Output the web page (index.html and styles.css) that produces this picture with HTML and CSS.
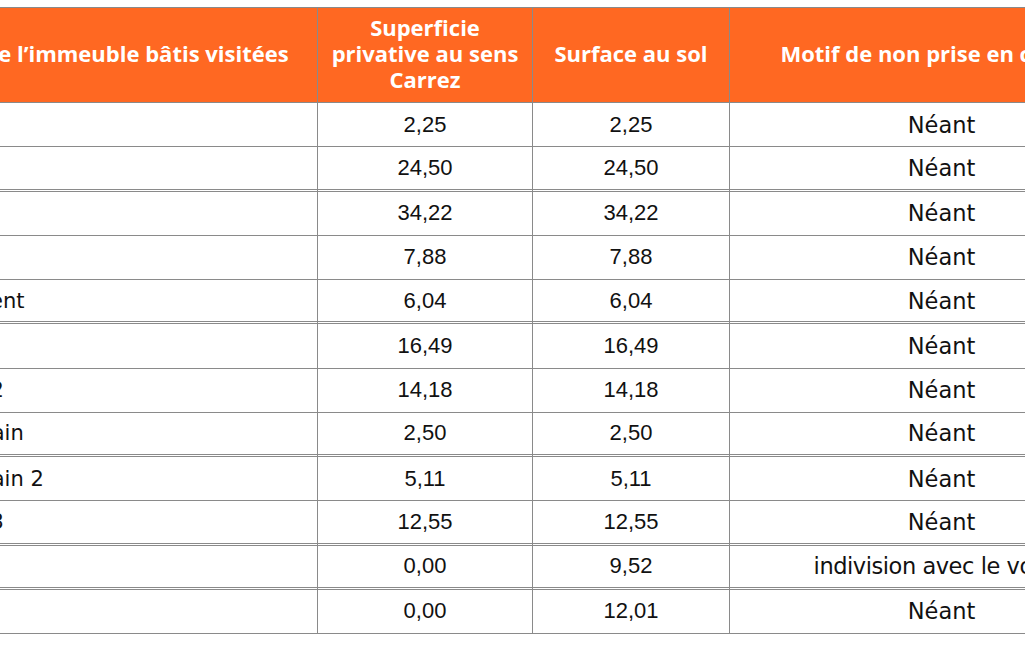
FILE: index.html
```html
<!DOCTYPE html>
<html lang="fr">
<head>
<meta charset="utf-8">
<title>Surfaces</title>
<link rel="stylesheet" href="styles.css">
</head>
<body>
<table class="surf">
  <thead>
    <tr>
      <th class="c1">Parties de l’immeuble bâtis visitées</th>
      <th class="c2">Superficie privative au sens Carrez</th>
      <th class="c3">Surface au sol</th>
      <th class="c4">Motif de non prise en compte</th>
    </tr>
  </thead>
  <tbody>
    <tr><td class="lbl">WC</td><td class="num">2,25</td><td class="num">2,25</td><td class="txt">Néant</td></tr>
    <tr class="dbl"><td class="lbl">Cuisine</td><td class="num">24,50</td><td class="num">24,50</td><td class="txt">Néant</td></tr>
    <tr><td class="lbl">Séjour</td><td class="num">34,22</td><td class="num">34,22</td><td class="txt">Néant</td></tr>
    <tr><td class="lbl">Bureau</td><td class="num">7,88</td><td class="num">7,88</td><td class="txt">Néant</td></tr>
    <tr class="dbl"><td class="lbl">Dégagement</td><td class="num">6,04</td><td class="num">6,04</td><td class="txt">Néant</td></tr>
    <tr><td class="lbl">Chambre</td><td class="num">16,49</td><td class="num">16,49</td><td class="txt">Néant</td></tr>
    <tr><td class="lbl">Chambre 2</td><td class="num">14,18</td><td class="num">14,18</td><td class="txt">Néant</td></tr>
    <tr class="dbl"><td class="lbl">Salle de bain</td><td class="num">2,50</td><td class="num">2,50</td><td class="txt">Néant</td></tr>
    <tr><td class="lbl">Salle de bain 2</td><td class="num">5,11</td><td class="num">5,11</td><td class="txt">Néant</td></tr>
    <tr class="dbl"><td class="lbl">Chambre 3</td><td class="num">12,55</td><td class="num">12,55</td><td class="txt">Néant</td></tr>
    <tr class="dbl"><td class="lbl">Cave</td><td class="num">0,00</td><td class="num">9,52</td><td class="txt long">indivision avec le voisin</td></tr>
    <tr><td class="lbl">Garage</td><td class="num">0,00</td><td class="num">12,01</td><td class="txt">Néant</td></tr>
  </tbody>
</table>
</body>
</html>
```

FILE: styles.css
```css
html, body {
  margin: 0;
  padding: 0;
  background: #ffffff;
  overflow: hidden;
}

.surf {
  margin: 7px 0 0 -119px;
  border-collapse: separate;
  border-spacing: 0;
  table-layout: fixed;
  width: 1273px;
  border-top: 1px solid #8a8a8a;
}

.surf th,
.surf td {
  box-sizing: border-box;
  border-right: 1px solid #8a8a8a;
  border-bottom: 1px solid #8a8a8a;
  vertical-align: middle;
  padding: 0 6px;
}

.surf th {
  height: 95px;
  padding-bottom: 4px;
  background: #ff6822;
  color: #ffffff;
  font-family: "Open Sans", "DejaVu Sans", sans-serif;
  font-weight: 700;
  font-size: 22px;
  line-height: 26px;
  text-align: center;
}

.surf .c1 { width: 437px; padding-right: 14px; }
.surf .c2 { width: 215px; }
.surf .c3 { width: 197px; }
.surf .c4 { width: 424px; }

.surf td {
  height: 44.25px;
  color: #111111;
  font-size: 21px;
  text-align: center;
}

.surf .lbl {
  text-align: left;
  padding-left: 7px;
  font-family: "DejaVu Sans", sans-serif;
  font-size: 21px;
}

.surf .num {
  font-family: "Liberation Sans", Arial, sans-serif;
  font-size: 22px;
}

.surf .txt {
  font-family: "DejaVu Sans", sans-serif;
  font-size: 22.5px;
  white-space: nowrap;
  overflow: hidden;
  text-overflow: clip;
}

.surf .txt.long {
  letter-spacing: -0.45px;
}

.surf tr.dbl td {
  border-bottom: 3px double #8a8a8a;
}
```
